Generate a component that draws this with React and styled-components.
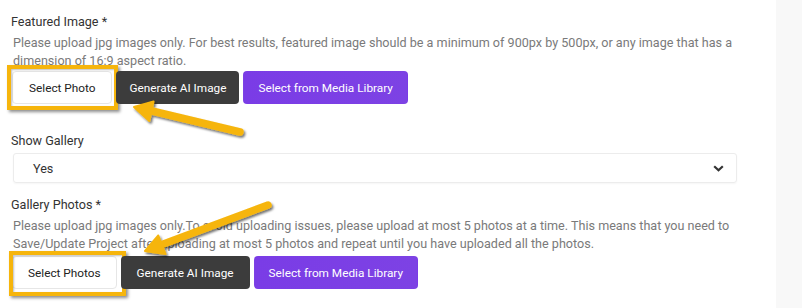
import React from 'react';
import styled, { createGlobalStyle } from 'styled-components';

const GlobalStyle = createGlobalStyle`
  html, body {
    margin: 0;
    padding: 0;
    background: #fff;
  }
  body {
    font-family: Roboto, 'Liberation Sans', Arial, sans-serif;
    -webkit-font-smoothing: antialiased;
  }
`;

const Page = styled.div`
  position: relative;
  display: flex;
  width: 802px;
  height: 308px;
  overflow: hidden;
`;

const Main = styled.main`
  flex: 1;
  padding: 14px 37px 0 11px;
  box-sizing: border-box;
`;

const Side = styled.aside`
  width: 26px;
  background: #f8f8f8;
`;

const Field = styled.section`
  margin-bottom: ${(p) => p.$gap || 0}px;
`;

const Label = styled.div`
  font-size: 12.6px;
  line-height: 16px;
  color: #333;
`;

const Help = styled.p`
  margin: 4px 0 0;
  padding-left: 2px;
  font-size: 12.6px;
  line-height: 18px;
  color: #7a7a7a;
`;

const Actions = styled.div`
  display: flex;
  gap: 4px;
  margin-top: ${(p) => p.$top || 2}px;
  padding-left: 1px;
`;

const Button = styled.button`
  position: relative;
  height: 33px;
  padding: 0 ${(p) => p.$pad || 14}px;
  border-radius: 4px;
  font-family: inherit;
  font-size: 11.8px;
  cursor: pointer;
  border: 1px solid transparent;
  background: #3c3c3c;
  color: #fff;

  &[data-kind='light'] {
    background: #fff;
    color: #222;
    border-color: #e6e6e6;
  }
  &[data-kind='purple'] {
    background: linear-gradient(90deg, #7a3ce6, #7d42e4);
    color: #fff;
  }
  &[data-mark='on']::after {
    content: '';
    position: absolute;
    inset: ${(p) => p.$ring || '-7px -7px -7px -6px'};
    border: 4px solid #f6b50c;
    box-shadow: 2px 2px 3px rgba(0, 0, 0, 0.45), inset 1px 1px 2px rgba(0, 0, 0, 0.25);
    pointer-events: none;
  }
`;

const SelectBox = styled.div`
  display: flex;
  align-items: center;
  justify-content: space-between;
  height: 30px;
  margin: 4px 2px 0;
  padding: 0 12px 0 19px;
  border: 1px solid #ececec;
  border-radius: 3px;
  box-shadow: 0 1px 2px rgba(0, 0, 0, 0.04);
  font-size: 12.6px;
  color: #333;
  box-sizing: border-box;
`;

const Overlay = styled.svg`
  position: absolute;
  inset: 0;
  pointer-events: none;
`;

const Chevron = () => (
  <svg width="11" height="7" viewBox="0 0 11 7">
    <polyline points="1.2,1.2 5.5,5.3 9.8,1.2" fill="none" stroke="#333" strokeWidth="2.2" />
  </svg>
);

const Arrow = ({ tail, base, tip, wings }) => (
  <g filter="url(#shade)">
    <line x1={tail[0]} y1={tail[1]} x2={base[0]} y2={base[1]} stroke="#f6b50c" strokeWidth="7.5" strokeLinecap="round" />
    <polygon points={`${tip.join(',')} ${wings[0].join(',')} ${wings[1].join(',')}`} fill="#f6b50c" stroke="#f6b50c" strokeWidth="2" strokeLinejoin="round" />
  </g>
);

export default function App() {
  return (
    <>
      <GlobalStyle />
      <Page>
        <Main>
          <Field $gap={29}>
            <Label>Featured Image *</Label>
            <Help>
              Please upload jpg images only. For best results, featured image should be a minimum of 900px by 500px, or any image that has a dimension of 16:9 aspect ratio.
            </Help>
            <Actions $top={1}>
              <Button data-kind="light" data-mark="on" $pad={16} $ring="-7px -7px -7px -6px">Select Photo</Button>
              <Button $pad={12}>Generate AI Image</Button>
              <Button data-kind="purple" $pad={14}>Select from Media Library</Button>
            </Actions>
          </Field>
          <Field $gap={14}>
            <Label>Show Gallery</Label>
            <SelectBox>
              <span>Yes</span>
              <Chevron />
            </SelectBox>
          </Field>
          <Field>
            <Label>Gallery Photos *</Label>
            <Help>
              Please upload jpg images only.To avoid uploading issues, please upload at most 5 photos at a time. This means that you need to Save/Update Project after uploading at most 5 photos and repeat until you have uploaded all the photos.
            </Help>
            <Actions $top={3}>
              <Button data-kind="light" data-mark="on" $pad={15} $ring="-6px -10px -8px -4px">Select Photos</Button>
              <Button $pad={15}>Generate AI Image</Button>
              <Button data-kind="purple" $pad={14}>Select from Media Library</Button>
            </Actions>
          </Field>
        </Main>
        <Side />
        <Overlay width="802" height="308" viewBox="0 0 802 308">
          <defs>
            <filter id="shade" x="-20%" y="-40%" width="140%" height="180%">
              <feDropShadow dx="1.5" dy="2" stdDeviation="1.2" floodColor="#000" floodOpacity="0.55" />
            </filter>
          </defs>
          <Arrow tail={[240, 132]} base={[152, 111]} tip={[134, 107]} wings={[[153.6, 101.4], [149.4, 120.9]]} />
          <Arrow tail={[268, 205]} base={[162, 244.5]} tip={[145, 251]} wings={[[165.5, 254], [158.3, 235.5]]} />
        </Overlay>
      </Page>
    </>
  );
}
